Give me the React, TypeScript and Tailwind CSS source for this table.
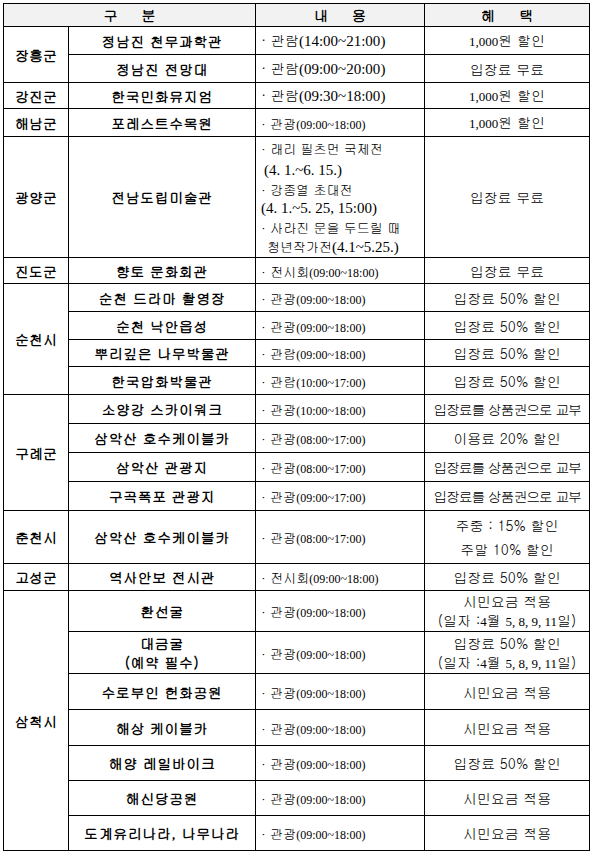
import React from "react";

const KR = "font-['Gulim','Noto_Sans_CJK_KR',sans-serif]";
const SERIF = "font-['Liberation_Serif','Noto_Sans_CJK_KR',serif]";

type Row = { name: React.ReactNode; content: React.ReactNode; benefit: React.ReactNode; h: string };
type Group = { region: string; rows: Row[] };

// big content: first rows use larger text
function Big({ label, time }: { label: string; time: string }) {
  return (
    <span className="whitespace-nowrap">
      <span className="text-[14px]">· {label}</span>
      <span className={`${SERIF} text-[15px]`}>({time})</span>
    </span>
  );
}

function Small({ label, time }: { label: string; time: string }) {
  return (
    <span className="whitespace-nowrap">
      <span className="text-[13px]">· {label}</span>
      <span className={`${SERIF} text-[12px]`}>({time})</span>
    </span>
  );
}

const won = (
  <span>
    <span className={`${SERIF} text-[13px]`}>1,000</span>원 할인
  </span>
);

const dates = (
  <span className="whitespace-nowrap h-[19px]">
    (일자 :<span className={`${SERIF} text-[13px]`}>4</span>월{" "}
    <span className={`${SERIF} text-[13px]`}>5, 8, 9, 11</span>일)
  </span>
);

const fee = <span>시민요금 적용</span>;
const half = <span>입장료 50% 할인</span>;
const voucher = <span className="tracking-[-1.2px]">입장료를 상품권으로 교부</span>;

const groups: Group[] = [
  {
    region: "장흥군",
    rows: [
      { name: "정남진 천무과학관", content: <Big label="관람" time="14:00~21:00" />, benefit: won, h: "h-[28px]" },
      { name: "정남진 전망대", content: <Big label="관람" time="09:00~20:00" />, benefit: "입장료 무료", h: "h-[28px]" },
    ],
  },
  {
    region: "강진군",
    rows: [{ name: "한국민화뮤지엄", content: <Big label="관람" time="09:30~18:00" />, benefit: won, h: "h-[26px]" }],
  },
  {
    region: "해남군",
    rows: [{ name: "포레스트수목원", content: <Small label="관광" time="09:00~18:00" />, benefit: won, h: "h-[28px]" }],
  },
  {
    region: "광양군",
    rows: [
      {
        name: "전남도립미술관",
        content: (
          <div className="flex flex-col text-[13px]">
            <span className="h-[19px] leading-[19px]">· 래리 필츠먼 국제전</span>
            <span className={`${SERIF} text-[15px] h-[19px] leading-[19px] pl-[3px] mt-[3px]`}>(4. 1.~6. 15.)</span>
            <span className="h-[19px] leading-[19px]">· 강종열 초대전</span>
            <span className={`${SERIF} text-[15px] h-[19px] leading-[19px]`}>(4. 1.~5. 25, 15:00)</span>
            <span className="h-[19px] leading-[19px]">· 사라진 문을 두드릴 때</span>
            <span className="h-[19px] leading-[19px] pl-[6px]">
              청년작가전<span className={`${SERIF} text-[15px]`}>(4.1~5.25.)</span>
            </span>
          </div>
        ),
        benefit: "입장료 무료",
        h: "h-[121px]",
      },
    ],
  },
  {
    region: "진도군",
    rows: [{ name: "향토 문화회관", content: <Small label="전시회" time="09:00~18:00" />, benefit: "입장료 무료", h: "h-[26px]" }],
  },
  {
    region: "순천시",
    rows: [
      { name: "순천 드라마 촬영장", content: <Small label="관광" time="09:00~18:00" />, benefit: half, h: "h-[28px]" },
      { name: "순천 낙안읍성", content: <Small label="관광" time="09:00~18:00" />, benefit: half, h: "h-[28px]" },
      { name: "뿌리깊은 나무박물관", content: <Small label="관람" time="09:00~18:00" />, benefit: half, h: "h-[27px]" },
      { name: "한국압화박물관", content: <Small label="관람" time="10:00~17:00" />, benefit: half, h: "h-[28px]" },
    ],
  },
  {
    region: "구례군",
    rows: [
      { name: "소양강 스카이워크", content: <Small label="관광" time="10:00~18:00" />, benefit: voucher, h: "h-[29px]" },
      { name: "삼악산 호수케이블카", content: <Small label="관광" time="08:00~17:00" />, benefit: "이용료 20% 할인", h: "h-[29px]" },
      { name: "삼악산 관광지", content: <Small label="관광" time="08:00~17:00" />, benefit: voucher, h: "h-[29px]" },
      { name: "구곡폭포 관광지", content: <Small label="관광" time="09:00~17:00" />, benefit: voucher, h: "h-[29px]" },
    ],
  },
  {
    region: "춘천시",
    rows: [
      {
        name: "삼악산 호수케이블카",
        content: <Small label="관광" time="08:00~17:00" />,
        benefit: (
          <div className="flex flex-col">
            <span className="h-[24px] leading-[24px]">주중 : 15% 할인</span>
            <span className="h-[24px] leading-[24px]">주말 10% 할인</span>
          </div>
        ),
        h: "h-[53px]",
      },
    ],
  },
  {
    region: "고성군",
    rows: [{ name: "역사안보 전시관", content: <Small label="전시회" time="09:00~18:00" />, benefit: half, h: "h-[27px]" }],
  },
  {
    region: "삼척시",
    rows: [
      {
        name: "환선굴",
        content: <Small label="관광" time="09:00~18:00" />,
        benefit: (
          <div className="flex flex-col leading-[19px]">
            <span className="h-[19px]">시민요금 적용</span>
            {dates}
          </div>
        ),
        h: "h-[41px]",
      },
      {
        name: (
          <div className="flex flex-col leading-[19px]">
            <span className="h-[19px]">대금굴</span>
            <span className="h-[19px]">(예약 필수)</span>
          </div>
        ),
        content: <Small label="관광" time="09:00~18:00" />,
        benefit: (
          <div className="flex flex-col leading-[19px]">
            <span className="h-[19px]">입장료 50% 할인</span>
            {dates}
          </div>
        ),
        h: "h-[42px]",
      },
      { name: "수로부인 헌화공원", content: <Small label="관광" time="09:00~18:00" />, benefit: fee, h: "h-[36px]" },
      { name: "해상 케이블카", content: <Small label="관광" time="09:00~18:00" />, benefit: fee, h: "h-[36px]" },
      { name: "해양 레일바이크", content: <Small label="관광" time="09:00~18:00" />, benefit: half, h: "h-[35px]" },
      { name: "해신당공원", content: <Small label="관광" time="09:00~18:00" />, benefit: fee, h: "h-[35px]" },
      { name: "도계유리나라, 나무나라", content: <Small label="관광" time="09:00~18:00" />, benefit: fee, h: "h-[35px]" },
    ],
  },
];

const cell = "border border-black p-0 align-middle";

export default function App() {
  return (
    <div className={`${KR} bg-white text-black w-[594px] h-[858px] pt-[3px] pl-[3px]`}>
      <table className="table-fixed border-collapse w-[586px] border-[1.5px] border-black">
        <colgroup>
          <col className="w-[65px]" />
          <col className="w-[187px]" />
          <col className="w-[169px]" />
          <col className="w-[165px]" />
        </colgroup>
        <thead>
          <tr className="h-[23px] bg-[#f2f2f2]">
            <th colSpan={2} className={cell}>
              <div className="flex justify-center gap-[24px] text-[14px] font-bold leading-none">
                <span>구</span>
                <span>분</span>
              </div>
            </th>
            <th className={cell}>
              <div className="flex justify-center gap-[24px] text-[14px] font-bold leading-none">
                <span>내</span>
                <span>용</span>
              </div>
            </th>
            <th className={cell}>
              <div className="flex justify-center gap-[24px] text-[14px] font-bold leading-none">
                <span>혜</span>
                <span>택</span>
              </div>
            </th>
          </tr>
        </thead>
        <tbody>
          {groups.map((g) =>
            g.rows.map((r, i) => (
              <tr key={g.region + i} className={r.h}>
                {i === 0 && (
                  <td rowSpan={g.rows.length} className={`${cell} text-center text-[14px] font-bold leading-none`}>
                    {g.region}
                  </td>
                )}
                <td className={`${cell} text-center text-[14px] font-bold tracking-[0.5px] leading-none`}>{r.name}</td>
                <td className={`${cell} pl-[5px] leading-none`}>{r.content}</td>
                <td className={`${cell} text-center text-[14px] leading-none`}>{r.benefit}</td>
              </tr>
            ))
          )}
        </tbody>
      </table>
    </div>
  );
}
